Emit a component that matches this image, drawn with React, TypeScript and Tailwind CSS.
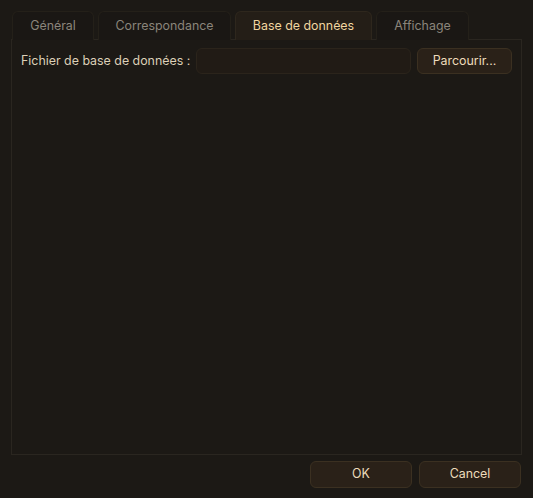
const tabs = [
  { label: 'Général', w: 'w-[82px]' },
  { label: 'Correspondance', w: 'w-[133px]' },
  { label: 'Base de données', w: 'w-[137px]', active: true },
  { label: 'Affichage', w: 'w-[93px]' },
];

export default function App() {
  return (
    <div
      className="w-[533px] h-[498px] bg-[#1c1915] text-[12.4px] flex flex-col"
      style={{ fontFamily: 'Inter, "Liberation Sans", sans-serif' }}
    >
      <div className="pt-[11px] px-[11px] flex flex-col">
        {/* tab bar */}
        <div className="flex gap-1 pl-px relative z-10 -mb-px">
          {tabs.map((t) =>
            t.active ? (
              <div
                key={t.label}
                className={`${t.w} h-[29px] pt-px flex items-center justify-center rounded-t-md border border-b-0 border-[#2e271d] bg-[#241e17] text-[#f1d6a0]`}
              >
                {t.label}
              </div>
            ) : (
              <div
                key={t.label}
                className={`${t.w} h-[29px] pt-px flex items-center justify-center rounded-t-md border border-b-0 border-[#242019] bg-[#1a1714] text-[#8b857b]`}
              >
                {t.label}
              </div>
            )
          )}
        </div>

        {/* panel */}
        <div className="h-[416px] border border-[#2a2620] bg-[#1c1915] px-[9px] pt-[8px]">
          <div className="flex items-center h-[26px]">
            <span className="text-[#ddd0b8] w-[175px] shrink-0 whitespace-nowrap">Fichier de base de données :</span>
            <div className="w-[215px] h-[26px] rounded-md border border-[#2b241b] bg-[#211b15]" />
            <button className="ml-[6px] w-[95px] h-[26px] rounded-md border border-[#3b3021] bg-[#2a2118] text-[#eddcbc]">
              Parcourir...
            </button>
          </div>
        </div>
      </div>

      {/* footer buttons */}
      <div className="flex justify-end gap-[7px] pr-[12px] pt-[6px]">
        <button className="w-[102px] h-[27px] rounded-md border border-[#3b3021] bg-[#2a2118] text-[#eddcbc]">
          OK
        </button>
        <button className="w-[102px] h-[27px] rounded-md border border-[#3b3021] bg-[#2a2118] text-[#eddcbc]">
          Cancel
        </button>
      </div>
    </div>
  );
}
